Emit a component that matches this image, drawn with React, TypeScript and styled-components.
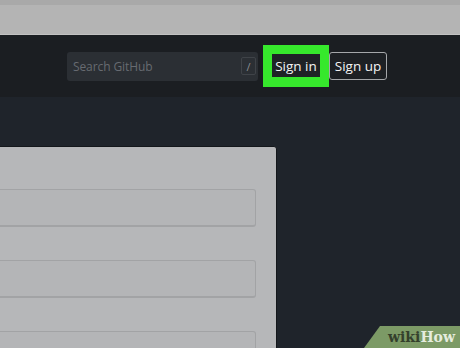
import styled, { createGlobalStyle } from 'styled-components';

const GlobalStyle = createGlobalStyle`
  html, body {
    margin: 0;
    padding: 0;
    background: #1f232a;
  }
  body {
    width: 460px;
    height: 348px;
    overflow: hidden;
    font-family: 'Open Sans', 'Noto Sans', sans-serif;
  }
`;

const Page = styled.div`
  position: relative;
  width: 460px;
  height: 348px;
  overflow: hidden;
  display: flex;
  flex-direction: column;
`;

const BrowserChrome = styled.div`
  height: 29px;
  background: #b4b4b4;
  border-top: 5px solid #a9a9a9;
  border-bottom: 1px solid #c2c2c2;
  flex-shrink: 0;
`;

const Header = styled.header`
  height: 62px;
  background: #1b1e22;
  display: flex;
  align-items: center;
  padding-left: 67px;
  flex-shrink: 0;
`;

const SearchBox = styled.div`
  width: 191px;
  height: 29px;
  box-sizing: border-box;
  background: #2b2f34;
  border-radius: 3px;
  display: flex;
  align-items: center;
  justify-content: space-between;
  padding: 0 2px 0 6px;
  margin-right: 5px;
`;

const SearchText = styled.span`
  font-size: 12px;
  color: #676b71;
  letter-spacing: -0.1px;
`;

const SlashKey = styled.span`
  width: 15px;
  height: 18px;
  box-sizing: border-box;
  border: 1px solid #3f4348;
  border-radius: 2px;
  font-size: 11px;
  color: #8a8e93;
  display: flex;
  align-items: center;
  justify-content: center;
`;

const Highlight = styled.div`
  width: 66px;
  height: 42px;
  box-sizing: border-box;
  background: #36e82c;
  padding: 9px 9px 10px;
  display: flex;
`;

const SignInButton = styled.button`
  flex: 1;
  border: none;
  background: #1f2226;
  color: #f4f4f4;
  font-family: inherit;
  font-size: 13.5px;
  padding: 0;
  cursor: pointer;
`;

const SignUpButton = styled.button`
  width: 58px;
  height: 28px;
  box-sizing: border-box;
  border: 1px solid #a5a7aa;
  border-radius: 3px;
  background: #1d2024;
  color: #f4f4f4;
  font-family: inherit;
  font-size: 13.5px;
  padding: 0;
  cursor: pointer;
`;

const Body = styled.main`
  flex: 1;
  display: flex;
  align-items: flex-start;
  padding-top: 49px;
  background: #1f242b;
`;

const LoginCard = styled.div`
  margin-left: -201px;
  width: 478px;
  flex-shrink: 0;
  box-sizing: border-box;
  background: #b6b7b9;
  border: 1px solid #14171b;
  border-radius: 3px;
  padding: 18px 20px 0 16px;
  display: flex;
  flex-direction: column;
`;

const FieldLabel = styled.label`
  flex-shrink: 0;
  font-size: 12px;
  font-weight: 600;
  color: #bec0c2;
  height: 24px;
  line-height: 16px;
  white-space: nowrap;
`;

const TextInput = styled.div`
  height: 38px;
  flex-shrink: 0;
  box-sizing: border-box;
  background: #b4b5b7;
  border: 1px solid #a2a3a5;
  border-bottom-width: 2px;
  border-radius: 3px;
  margin-bottom: 33px;
`;

const Watermark = styled.div`
  position: absolute;
  right: 0;
  bottom: 0;
  width: 96px;
  height: 22px;
  background: #7c9a66;
  clip-path: polygon(16px 0, 100% 0, 100% 100%, 0 100%);
  display: flex;
  align-items: center;
  justify-content: flex-end;
  padding-right: 5px;
  box-sizing: border-box;
  font-family: 'DejaVu Serif', 'Liberation Serif', serif;
  font-weight: 700;
  font-size: 14px;
`;

const WikiPart = styled.span`
  color: #34402c;
`;

const HowPart = styled.span`
  color: #e6ecdf;
`;

export default function App() {
  return (
    <Page>
      <GlobalStyle />
      <BrowserChrome />
      <Header>
        <SearchBox>
          <SearchText>Search GitHub</SearchText>
          <SlashKey>/</SlashKey>
        </SearchBox>
        <Highlight>
          <SignInButton>Sign in</SignInButton>
        </Highlight>
        <SignUpButton>Sign up</SignUpButton>
      </Header>
      <Body>
        <LoginCard>
          <FieldLabel>Username or email address</FieldLabel>
          <TextInput />
          <TextInput />
          <TextInput />
        </LoginCard>
      </Body>
      <Watermark>
        <WikiPart>wiki</WikiPart>
        <HowPart>How</HowPart>
      </Watermark>
    </Page>
  );
}
